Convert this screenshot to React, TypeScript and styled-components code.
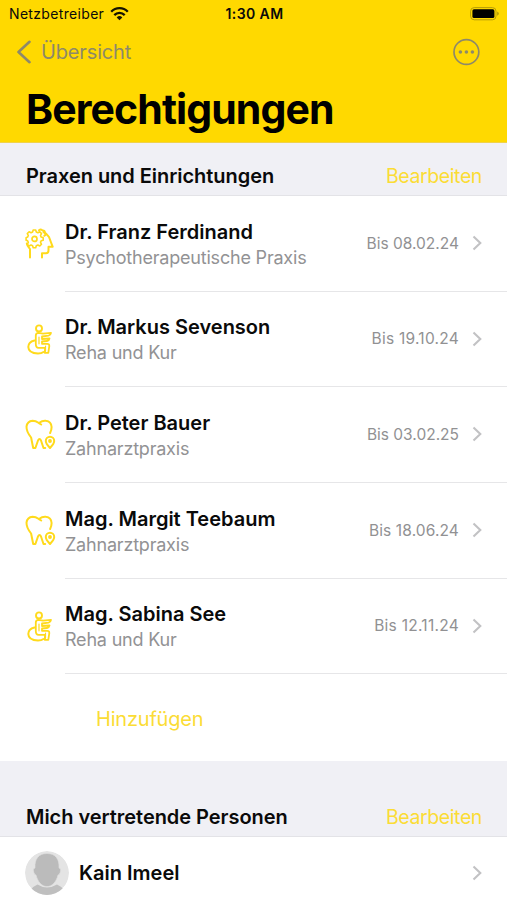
import React from 'react';
import styled, { createGlobalStyle } from 'styled-components';

const YELLOW = '#ffd900';
const GREY = '#8e8969';

const GlobalStyle = createGlobalStyle`
  * { box-sizing: border-box; }
  body {
    margin: 0;
    background: #fff;
    color: #0a0a0a;
    font-family: Inter, 'Liberation Sans', sans-serif;
    font-feature-settings: 'calt' 0;
  }
  h1, h2, p { margin: 0; }
  button { border: 0; padding: 0; background: none; font: inherit; color: inherit; }
  svg { display: block; flex: none; }
`;

const Screen = styled.main`
  width: 507px;
  height: 900px;
  overflow: hidden;
  white-space: nowrap;
`;

const Header = styled.header`
  height: 143px;
  background: ${YELLOW};
  border-bottom: 1px solid #f0d24a;
`;

const StatusBar = styled.div`
  display: grid;
  grid-template-columns: 1fr auto 1fr;
  align-items: center;
  height: 27px;
  padding: 0 7px 0 9px;
  font-size: 14px;
  line-height: 18px;
`;

const Carrier = styled.span`
  display: flex;
  align-items: center;
  gap: 6px;
  letter-spacing: 0.33px;
`;

const Clock = styled.span`
  font-weight: 600;
  letter-spacing: 0.4px;
`;

const BatterySlot = styled.span`
  justify-self: end;
`;

const NavBar = styled.nav`
  display: flex;
  align-items: center;
  justify-content: space-between;
  height: 50px;
  padding: 0 27px 0 16px;
`;

const BackButton = styled.button`
  display: flex;
  align-items: center;
  gap: 9px;
  font-size: 20px;
  letter-spacing: -0.15px;
  color: ${GREY};
`;

const Title = styled.h1`
  padding: 6px 26px 0;
  font-size: 41px;
  line-height: 52px;
  font-weight: 700;
  letter-spacing: -0.9px;
  color: #000;
`;

const SectionHeader = styled.div<{ $height: number }>`
  display: flex;
  align-items: flex-end;
  justify-content: space-between;
  height: ${(p) => p.$height}px;
  padding: 0 25px 6px 26px;
  background: #f0f0f5;
  border-bottom: 1px solid #e3e3e7;
  line-height: 26px;
`;

const SectionTitle = styled.h2`
  font-size: 20px;
  font-weight: 600;
  letter-spacing: -0.04px;
`;

const EditButton = styled.button`
  font-size: 19.5px;
  letter-spacing: -0.4px;
  color: #fbdc35;
`;

const Row = styled.div`
  display: flex;
  height: 95.7px;
  padding-left: 25px;
`;

const IconSlot = styled.div`
  display: flex;
  align-items: center;
  width: 40px;
`;

const RowBody = styled.div`
  flex: 1;
  display: flex;
  align-items: center;
  justify-content: space-between;
  padding: 1.4px 25px 0 0;
  border-bottom: 1px solid #e6e6e8;
`;

const Name = styled.p`
  font-size: 20px;
  line-height: 26px;
  font-weight: 600;
  letter-spacing: 0;
`;

const Kind = styled.p`
  font-size: 18px;
  line-height: 25px;
  letter-spacing: -0.2px;
  color: #929294;
`;

const Expiry = styled.div<{ $tracking: number }>`
  display: flex;
  align-items: center;
  gap: 13px;
  padding-bottom: 2px;
  font-size: 15.5px;
  letter-spacing: ${(p) => p.$tracking}px;
  color: #919193;
`;

const AddRow = styled.div`
  display: flex;
  align-items: center;
  height: 86.5px;
  padding: 2px 0 0 96px;
`;

const AddButton = styled.button`
  font-size: 20px;
  letter-spacing: -0.2px;
  color: #fbdc35;
`;

const PersonRow = styled.div`
  display: flex;
  align-items: center;
  height: 72px;
  padding: 0 25px;
  gap: 10px;
`;

const PersonName = styled(Name)`
  flex: 1;
`;

const Chevron = () => (
  <svg width="10" height="16" viewBox="0 0 10 16" fill="none" stroke="#c2c2c4" strokeWidth="2.1">
    <path d="M1.5 1.5 8.3 8l-6.800 6.500" />
  </svg>
);

const BackChevron = () => (
  <svg width="16" height="24" viewBox="0 0 16 24" fill="none" stroke={GREY} strokeWidth="2.6" strokeLinecap="round" strokeLinejoin="round">
    <path d="M13.5 1.800 2.500 12l11 10.200" />
  </svg>
);

const Wifi = () => (
  <svg width="19" height="14" viewBox="0 0 19 14" fill="none" stroke="#171400" strokeWidth="2.3">
    <path d="M1.2 4.7a11.600 11.600 0 0 1 16.600 0M4.300 8.100a7.300 7.300 0 0 1 10.400 0" />
    <path d="M9.5 13.3 6.700 10.400a4 4 0 0 1 5.600 0Z" fill="#171400" stroke="none" />
  </svg>
);

const Battery = () => (
  <svg width="30" height="14" viewBox="0 0 30 14">
    <rect x=".6" y=".6" width="25.4" height="12.2" rx="3.6" fill="none" stroke="#b59c08" />
    <rect x="2.4" y="2.3" width="22" height="8.8" rx="1.6" />
    <path d="M27.3 4.6q2.800 2.100 0 4.200Z" fill="#a08a08" />
  </svg>
);

const More = () => (
  <svg width="28" height="28" viewBox="0 0 28 28" fill={GREY}>
    <circle cx="14.4" cy="14" r="12.4" fill="none" stroke={GREY} strokeWidth="1.7" />
    <circle cx="8.4" cy="14" r="1.8" />
    <circle cx="14.4" cy="14" r="1.8" />
    <circle cx="20.4" cy="14" r="1.8" />
  </svg>
);

const Drawing = styled.svg`
  fill: none;
  stroke: #ffda1c;
  stroke-width: 2;
  stroke-linecap: round;
  stroke-linejoin: round;
`;

const MindIcon = () => (
  <Drawing width="30" height="32" viewBox="0 0 30 32">
    <path d="M5 29.500V21C3.500 19 2 17.500 1.800 15.500M17 29.500v-4.200h4q2.500 0 2.500-3v-3.500h4.200L24 9Q21.500 5.500 18.500 4" />
    <path d="M8.200 2h2.500l.6 2 1.600.7 1.900-.9 1.700 1.800-1 1.900.7 1.600 2 .6v2.500l-2 .6-.7 1.600 1 1.900-1.700 1.700-1.900-1-1.600.7-.6 2H8.200l-.6-2-1.600-.7-1.900 1-1.800-1.700 1-1.900-.7-1.600-1.500-.6V9.700l1.500-.6.7-1.600-1-1.900 1.800-1.800 1.900.9 1.600-.7Z" strokeWidth="1.6" />
    <circle cx="9.5" cy="10.9" r="2.5" strokeWidth="1.7" />
    <path d="M14 2.300q2-1.800 3.500.2 2.500-.3 2.300 2.300 1.600 1.900-.5 3" />
  </Drawing>
);

const RehabIcon = () => (
  <Drawing width="30" height="32" viewBox="0 0 30 32">
    <circle cx="14" cy="4.4" r="3" strokeWidth="1.9" />
    <path d="M10.800 20V11.500q0-2.500 2.700-2.600l4.500.8 8-.8q-.3 2.300-2.500 2.800l-6.500.8v2.500l7.500-.5q-.5 2.300-2.500 2.500l-5 .5v2.300h5.200q2.200 0 2.100 2.300l-1 6.700h-3.500l.3-5h-6.500q-2.800 0-2.800-3.800" strokeWidth="1.8" />
    <path d="M9.500 16.500C5.500 17.500 3.300 20 3.300 23q.2 6.300 9.700 6.500 3.500 0 5.500-1.500" />
    <path d="M14 13v6.800M20.500 22.200v5" strokeWidth="1.2" />
  </Drawing>
);

const ToothIcon = () => (
  <Drawing width="32" height="32" viewBox="0 0 32 32">
    <path d="M20.200 29h-1.700L16 21.500q-1.500-2.800-3 0L10.400 29H8.200L6.100 18.500Q1.300 12.400 1.500 7.600 2.200 2.200 7.600 1.800q3 0 6.300 2.200 3.800-2.700 7-2.200 5.300.7 5.700 6.200 0 3-1.500 6M13.500 3.800l2.700 1.700" />
    <path d="M25 29q-4.200-4.400-4.200-7a4.200 4.200 0 0 1 8.400 0q0 2.600-4.200 7Z" />
    <circle cx="25" cy="22" r=".9" fill="#ffda1c" />
  </Drawing>
);

const Avatar = () => (
  <svg width="44" height="44" viewBox="0 0 44 44">
    <defs>
      <clipPath id="avatarDisc"><circle cx="22" cy="22" r="22" /></clipPath>
    </defs>
    <g clipPath="url(#avatarDisc)">
      <circle cx="22" cy="22" r="22" fill="#e4e4e4" />
      <path d="M6 44v-5.500q2-3 6.500-5 9.500 6 19.500 0 4.500 2 6.500 5V44Z" fill="#bfbfbf" />
      <path d="M22 2.500c8.500 0 12.500 5.500 12 14.500q2.600.7 1 4.800-.6 2.200-2 2.200C31 31.500 27 35.500 22 35.500S13 31.500 11 24q-1.400 0-2-2.200-1.600-4.100 1-4.800C9.500 8 13.500 2.500 22 2.500Z" fill="#bbb" stroke="#e0e0e0" strokeWidth=".6" />
    </g>
  </svg>
);

const icons = { mind: MindIcon, rehab: RehabIcon, tooth: ToothIcon };

const practices: { name: string; kind: string; until: string; icon: keyof typeof icons; tracking: number }[] = [
  { name: 'Dr. Franz Ferdinand', kind: 'Psychotherapeutische Praxis', until: '08.02.24', icon: 'mind', tracking: 0 },
  { name: 'Dr. Markus Sevenson', kind: 'Reha und Kur', until: '19.10.24', icon: 'rehab', tracking: 0.25 },
  { name: 'Dr. Peter Bauer', kind: 'Zahnarztpraxis', until: '03.02.25', icon: 'tooth', tracking: 0 },
  { name: 'Mag. Margit Teebaum', kind: 'Zahnarztpraxis', until: '18.06.24', icon: 'tooth', tracking: 0.12 },
  { name: 'Mag. Sabina See', kind: 'Reha und Kur', until: '12.11.24', icon: 'rehab', tracking: 0.27 },
];

export default function App() {
  return (
    <>
      <GlobalStyle />
      <Screen>
        <Header>
          <StatusBar>
            <Carrier>Netzbetreiber <Wifi /></Carrier>
            <Clock>1:30 AM</Clock>
            <BatterySlot><Battery /></BatterySlot>
          </StatusBar>
          <NavBar>
            <BackButton><BackChevron />Übersicht</BackButton>
            <button aria-label="Mehr"><More /></button>
          </NavBar>
          <Title>Berechtigungen</Title>
        </Header>
        <section>
          <SectionHeader $height={53}>
            <SectionTitle>Praxen und Einrichtungen</SectionTitle>
            <EditButton>Bearbeiten</EditButton>
          </SectionHeader>
          {practices.map((p) => {
            const Icon = icons[p.icon];
            return (
              <Row key={p.name}>
                <IconSlot><Icon /></IconSlot>
                <RowBody>
                  <div>
                    <Name>{p.name}</Name>
                    <Kind>{p.kind}</Kind>
                  </div>
                  <Expiry $tracking={p.tracking}>Bis {p.until}<Chevron /></Expiry>
                </RowBody>
              </Row>
            );
          })}
          <AddRow><AddButton>Hinzufügen</AddButton></AddRow>
        </section>
        <section>
          <SectionHeader $height={76}>
            <SectionTitle>Mich vertretende Personen</SectionTitle>
            <EditButton>Bearbeiten</EditButton>
          </SectionHeader>
          <PersonRow>
            <Avatar />
            <PersonName>Kain Imeel</PersonName>
            <Chevron />
          </PersonRow>
        </section>
      </Screen>
    </>
  );
}
